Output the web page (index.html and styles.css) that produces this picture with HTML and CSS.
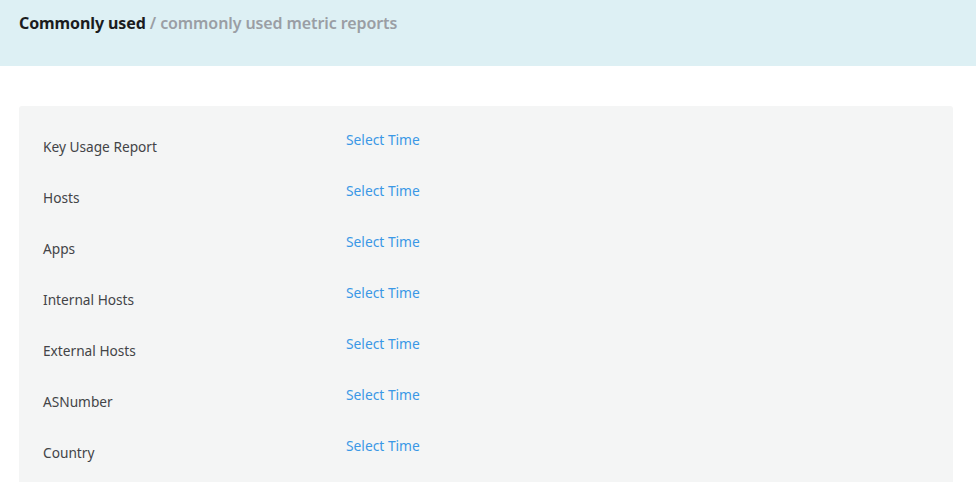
FILE: index.html
```html
<!DOCTYPE html>
<html>
<head>
<meta charset="utf-8">
<link rel="stylesheet" href="styles.css">
</head>
<body>
<header class="page-header">
  <h1 class="title"><span class="title-main">Commonly used</span><span class="title-sub"> / commonly used metric reports</span></h1>
</header>
<main class="content">
  <section class="card">
    <div class="row"><div class="label">Key Usage Report</div><a class="link">Select Time</a></div>
    <div class="row"><div class="label">Hosts</div><a class="link">Select Time</a></div>
    <div class="row"><div class="label">Apps</div><a class="link">Select Time</a></div>
    <div class="row"><div class="label">Internal Hosts</div><a class="link">Select Time</a></div>
    <div class="row"><div class="label">External Hosts</div><a class="link">Select Time</a></div>
    <div class="row"><div class="label">ASNumber</div><a class="link">Select Time</a></div>
    <div class="row"><div class="label">Country</div><a class="link">Select Time</a></div>
  </section>
</main>
</body>
</html>
```
FILE: styles.css
```css
* { box-sizing: border-box; }
html, body { margin: 0; padding: 0; background: #ffffff; }
body {
  font-family: "Noto Sans", "Liberation Sans", sans-serif;
  overflow: hidden;
}
.page-header {
  background: #ddf0f4;
  height: 66px;
  padding: 13px 19px 0;
}
.title {
  margin: 0;
  font-size: 16px;
  line-height: 20px;
  font-weight: 700;
  letter-spacing: -0.1px;
}
.title-main { color: #1b1c1e; }
.title-sub { color: #9a9ea4; font-weight: 600; }
.content { padding: 40px 23px 0 19px; }
.card {
  background: #f4f5f5;
  border-radius: 3px;
  padding: 17px 24px 10px;
}
.row {
  display: flex;
  height: 51px;
}
.label {
  width: 303px;
  padding-top: 14px;
  font-size: 13.7px;
  line-height: 20px;
  color: #434447;
}
.link {
  padding-top: 7px;
  font-size: 13.8px;
  line-height: 20px;
  color: #3a98e6;
  cursor: pointer;
}
```
